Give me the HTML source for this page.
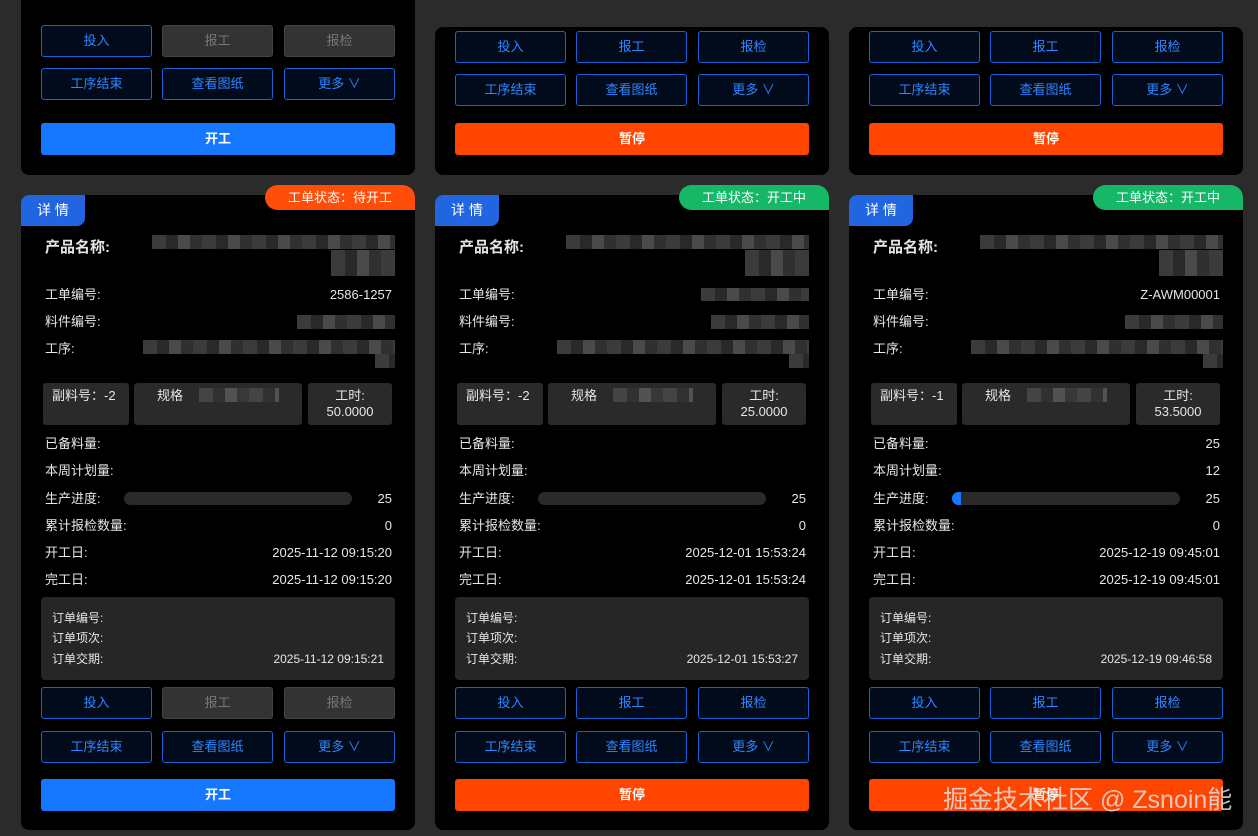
<!DOCTYPE html>
<html><head><meta charset="utf-8"><style>
*{box-sizing:border-box;margin:0;padding:0}
body{width:1258px;height:836px;background:#2b2b2b;font-family:"Liberation Sans","Noto Sans CJK SC",sans-serif;color:#e6e6e6;position:relative;overflow:hidden;font-size:13px}
.card{position:absolute;background:#000;border-radius:8px;width:394px}
.a{position:absolute}
.btn{position:absolute;height:32px;width:111px;border:1px solid #1a63d6;border-radius:3px;background:#020b1c;color:#2f86ff;text-align:center;line-height:30px;font-size:13px}
.dis{background:#333;border-color:#444;color:#777}
.big{position:absolute;left:20px;width:354px;height:32px;border-radius:3px;color:#fff;text-align:center;line-height:32px;font-size:13px;font-weight:bold}
.blue{background:#1677ff}.org{background:#ff4500}
.tab{position:absolute;left:0;top:0;width:64px;height:31px;background:#2265e0;border-radius:8px 0 8px 0;color:#fff;font-size:14px;line-height:31px;text-align:center}
.tag{position:absolute;left:244px;top:-10px;width:150px;height:25px;border-radius:13px 13px 0 13px;color:#fff;font-size:13px;line-height:25px;text-align:center}
.row{position:absolute;left:24px;right:23px;height:20px;line-height:20px;font-size:13px;margin-top:1px}
.row .v{position:absolute;right:0;top:0}
.bx{position:absolute;top:188px;height:42px;background:#2a2a2a;border-radius:3px;font-size:13px;line-height:16px;padding-top:5px}
.blur{position:absolute;background:repeating-linear-gradient(90deg,#4a4a4a 0 14px,#333 14px 26px,#5c5c5c 26px 38px,#3c3c3c 38px 50px);opacity:.8}
.pb{position:absolute;left:103px;width:228px;top:297px;height:13px;border-radius:7px;background:#2a2a2a}
.ob{position:absolute;left:20px;width:354px;top:402px;height:83px;background:#262626;border-radius:4px;font-size:12px}
.ob div{position:absolute;left:11px;height:20px;line-height:20px}
.wm{position:absolute;left:943px;top:780px;font-size:25px;color:#e0e0e0;opacity:.85}
</style></head><body>

<div class="card" style="left:21px;top:-10px;height:185px">
<div class="btn" style="left:20px;top:35px">投入</div><div class="btn dis" style="left:141px;top:35px">报工</div><div class="btn dis" style="left:263px;top:35px">报检</div>
<div class="btn" style="left:20px;top:78px">工序结束</div><div class="btn" style="left:141px;top:78px">查看图纸</div><div class="btn" style="left:263px;top:78px">更多 ∨</div>
<div class="big blue" style="top:133px">开工</div></div>
<div class="card" style="left:435px;top:27px;height:148px">
<div class="btn" style="left:20px;top:4px">投入</div><div class="btn" style="left:141px;top:4px">报工</div><div class="btn" style="left:263px;top:4px">报检</div>
<div class="btn" style="left:20px;top:47px">工序结束</div><div class="btn" style="left:141px;top:47px">查看图纸</div><div class="btn" style="left:263px;top:47px">更多 ∨</div>
<div class="big org" style="top:96px">暂停</div></div>
<div class="card" style="left:849px;top:27px;height:148px">
<div class="btn" style="left:20px;top:4px">投入</div><div class="btn" style="left:141px;top:4px">报工</div><div class="btn" style="left:263px;top:4px">报检</div>
<div class="btn" style="left:20px;top:47px">工序结束</div><div class="btn" style="left:141px;top:47px">查看图纸</div><div class="btn" style="left:263px;top:47px">更多 ∨</div>
<div class="big org" style="top:96px">暂停</div></div>

<div class="card" style="left:21px;top:195px;height:635px">
<div class="tab">详 情</div><div class="tag" style="background:#ff4d0a">工单状态：待开工</div>
<div class="a" style="left:24px;top:41px;font-size:15px;font-weight:bold">产品名称:</div>
<div class="blur" style="left:131px;top:40px;width:243px;height:14px"></div><div class="blur" style="left:310px;top:55px;width:64px;height:26px"></div>
<div class="row" style="top:89px">工单编号:<span class="v">2586-1257</span></div>
<div class="row" style="top:116px">料件编号:</div><div class="blur" style="left:276px;top:120px;width:98px;height:14px"></div>
<div class="row" style="top:143px">工序:</div><div class="blur" style="left:122px;top:145px;width:252px;height:14px"></div><div class="blur" style="left:354px;top:159px;width:20px;height:14px"></div>
<div class="bx" style="left:22px;width:86px;padding-left:9px">副料号：-2</div>
<div class="bx" style="left:113px;width:168px;padding-left:23px">规格</div><div class="blur" style="left:178px;top:193px;width:80px;height:14px"></div>
<div class="bx" style="left:287px;width:84px;text-align:center">工时:<br>50.0000</div>
<div class="row" style="top:238px">已备料量:</div>
<div class="row" style="top:265px">本周计划量:</div>
<div class="row" style="top:293px">生产进度:<span class="v">25</span></div><div class="pb"></div>
<div class="row" style="top:320px">累计报检数量:<span class="v">0</span></div>
<div class="row" style="top:347px">开工日:<span class="v">2025-11-12 09:15:20</span></div>
<div class="row" style="top:374px">完工日:<span class="v">2025-11-12 09:15:20</span></div>
<div class="ob"><div style="top:11px">订单编号:</div><div style="top:31px">订单项次:</div><div style="top:52px">订单交期:</div><div style="top:52px;left:auto;right:11px">2025-11-12 09:15:21</div></div>
<div class="btn" style="left:20px;top:492px">投入</div><div class="btn dis" style="left:141px;top:492px">报工</div><div class="btn dis" style="left:263px;top:492px">报检</div>
<div class="btn" style="left:20px;top:536px">工序结束</div><div class="btn" style="left:141px;top:536px">查看图纸</div><div class="btn" style="left:263px;top:536px">更多 ∨</div>
<div class="big blue" style="top:584px">开工</div></div>

<div class="card" style="left:435px;top:195px;height:635px">
<div class="tab">详 情</div><div class="tag" style="background:#16b868">工单状态：开工中</div>
<div class="a" style="left:24px;top:41px;font-size:15px;font-weight:bold">产品名称:</div>
<div class="blur" style="left:131px;top:40px;width:243px;height:14px"></div><div class="blur" style="left:310px;top:55px;width:64px;height:26px"></div>
<div class="row" style="top:89px">工单编号:</div><div class="blur" style="left:266px;top:93px;width:108px;height:13px"></div>
<div class="row" style="top:116px">料件编号:</div><div class="blur" style="left:276px;top:120px;width:98px;height:14px"></div>
<div class="row" style="top:143px">工序:</div><div class="blur" style="left:122px;top:145px;width:252px;height:14px"></div><div class="blur" style="left:354px;top:159px;width:20px;height:14px"></div>
<div class="bx" style="left:22px;width:86px;padding-left:9px">副料号：-2</div>
<div class="bx" style="left:113px;width:168px;padding-left:23px">规格</div><div class="blur" style="left:178px;top:193px;width:80px;height:14px"></div>
<div class="bx" style="left:287px;width:84px;text-align:center">工时:<br>25.0000</div>
<div class="row" style="top:238px">已备料量:</div>
<div class="row" style="top:265px">本周计划量:</div>
<div class="row" style="top:293px">生产进度:<span class="v">25</span></div><div class="pb"></div>
<div class="row" style="top:320px">累计报检数量:<span class="v">0</span></div>
<div class="row" style="top:347px">开工日:<span class="v">2025-12-01 15:53:24</span></div>
<div class="row" style="top:374px">完工日:<span class="v">2025-12-01 15:53:24</span></div>
<div class="ob"><div style="top:11px">订单编号:</div><div style="top:31px">订单项次:</div><div style="top:52px">订单交期:</div><div style="top:52px;left:auto;right:11px">2025-12-01 15:53:27</div></div>
<div class="btn" style="left:20px;top:492px">投入</div><div class="btn" style="left:141px;top:492px">报工</div><div class="btn" style="left:263px;top:492px">报检</div>
<div class="btn" style="left:20px;top:536px">工序结束</div><div class="btn" style="left:141px;top:536px">查看图纸</div><div class="btn" style="left:263px;top:536px">更多 ∨</div>
<div class="big org" style="top:584px">暂停</div></div>

<div class="card" style="left:849px;top:195px;height:635px">
<div class="tab">详 情</div><div class="tag" style="background:#16b868">工单状态：开工中</div>
<div class="a" style="left:24px;top:41px;font-size:15px;font-weight:bold">产品名称:</div>
<div class="blur" style="left:131px;top:40px;width:243px;height:14px"></div><div class="blur" style="left:310px;top:55px;width:64px;height:26px"></div>
<div class="row" style="top:89px">工单编号:<span class="v">Z-AWM00001</span></div>
<div class="row" style="top:116px">料件编号:</div><div class="blur" style="left:276px;top:120px;width:98px;height:14px"></div>
<div class="row" style="top:143px">工序:</div><div class="blur" style="left:122px;top:145px;width:252px;height:14px"></div><div class="blur" style="left:354px;top:159px;width:20px;height:14px"></div>
<div class="bx" style="left:22px;width:86px;padding-left:9px">副料号：-1</div>
<div class="bx" style="left:113px;width:168px;padding-left:23px">规格</div><div class="blur" style="left:178px;top:193px;width:80px;height:14px"></div>
<div class="bx" style="left:287px;width:84px;text-align:center">工时:<br>53.5000</div>
<div class="row" style="top:238px">已备料量:<span class="v">25</span></div>
<div class="row" style="top:265px">本周计划量:<span class="v">12</span></div>
<div class="row" style="top:293px">生产进度:<span class="v">25</span></div><div class="pb"><div style="width:9px;height:13px;background:#1677ff;border-radius:7px 0 0 7px"></div></div>
<div class="row" style="top:320px">累计报检数量:<span class="v">0</span></div>
<div class="row" style="top:347px">开工日:<span class="v">2025-12-19 09:45:01</span></div>
<div class="row" style="top:374px">完工日:<span class="v">2025-12-19 09:45:01</span></div>
<div class="ob"><div style="top:11px">订单编号:</div><div style="top:31px">订单项次:</div><div style="top:52px">订单交期:</div><div style="top:52px;left:auto;right:11px">2025-12-19 09:46:58</div></div>
<div class="btn" style="left:20px;top:492px">投入</div><div class="btn" style="left:141px;top:492px">报工</div><div class="btn" style="left:263px;top:492px">报检</div>
<div class="btn" style="left:20px;top:536px">工序结束</div><div class="btn" style="left:141px;top:536px">查看图纸</div><div class="btn" style="left:263px;top:536px">更多 ∨</div>
<div class="big org" style="top:584px">暂停</div></div>

<div class="wm">掘金技术社区 @ Zsnoin能</div>
</body></html>
